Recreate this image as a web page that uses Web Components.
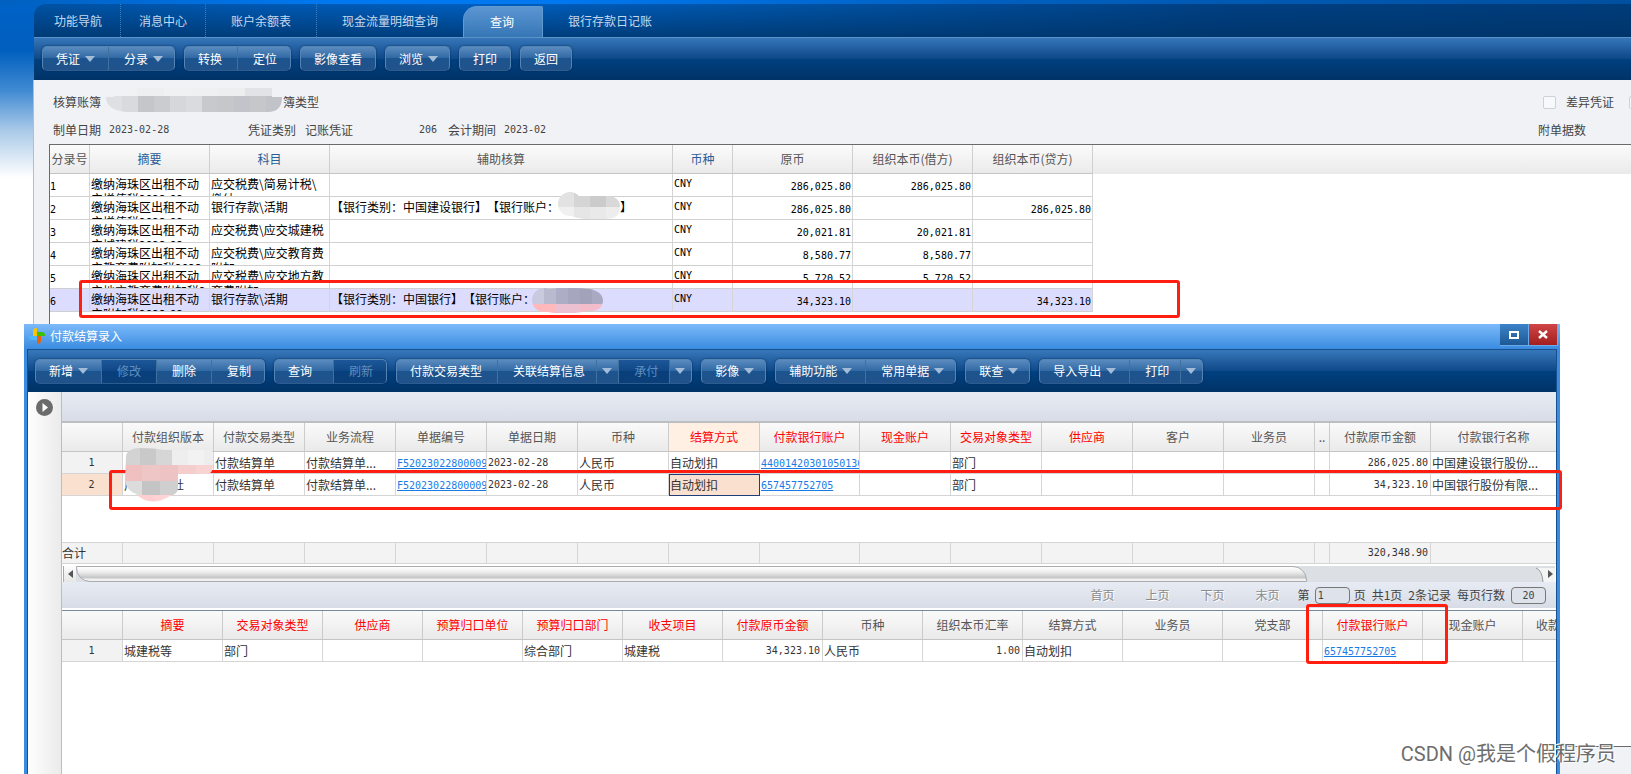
<!DOCTYPE html>
<html lang="zh-CN">
<head>
<meta charset="utf-8">
<title>付款结算录入</title>
<style>
  html, body { margin: 0; height: 100%; }
  body {
    font: 12px/16px "Noto Sans CJK SC", sans-serif;
    color: #444; background: #fff; overflow: hidden;
    --num: 10px/16px "DejaVu Sans Mono", "Liberation Mono", monospace;
  }
</style>
</head>
<body>
<erp-app></erp-app>

<script>
const define = (name, html, setup) => {
  const tpl = document.createElement('template');
  tpl.innerHTML = html;
  customElements.define(name, class extends HTMLElement {
    constructor() {
      super();
      this.attachShadow({ mode: 'open' }).append(tpl.content.cloneNode(true));
    }
    connectedCallback() { if (setup) setup(this, this.shadowRoot); }
  });
};

/* ---------- tabs ---------- */
define('erp-tab', `
<style>
  :host { display: flex; box-sizing: border-box; }
  :host([divided]) { border-right: 1px dotted #3f7dbd; }
  button { font: inherit; color: #c5d9ee; background: none; border: 0; padding: 0 18px; white-space: nowrap; }
  :host([wide]) button { padding: 0 25px; }
  :host([active]) button {
    color: #fff; padding: 0 28px 0 26px; margin-top: 2px; border: 1px solid #5f9ad3; border-bottom: 0;
    border-radius: 14px 2px 0 0; background: linear-gradient(#5b96d2, #3676b6);
  }
</style>
<button role="tab"><slot></slot></button>`);

define('erp-tabs', `
<style>
  :host {
    display: flex; height: 33px; padding: 0 16px 0 2px; border-radius: 12px 0 0 0;
    background: linear-gradient(to bottom, rgba(0,51,102,0), rgba(0,51,102,.75)),
                linear-gradient(to right, #0052a4, #005fc0 28%, #0052a4 48%, #003f82 75%, #003c7a);
  }
</style>
<slot></slot>`);

/* ---------- toolbar ---------- */
define('erp-toolbar', `
<style>
  :host {
    display: flex; align-items: center; gap: 9px; height: 43px; padding: 0 8px; box-sizing: border-box;
    border-top: 1px solid #5b93cb; padding-bottom: 1px; overflow: hidden;
    background: linear-gradient(#3676b8, #0d4788 50%, #004080 50%, #003366);
  }
  :host([inner]) { height: 42px; padding-left: 7px; border-top-color: #3676b8; }
</style>
<slot></slot>`);

define('erp-group', `
<style>
  :host {
    display: flex; flex: none; height: 25px; box-sizing: border-box; overflow: hidden;
    border: 1px solid #5585b5; border-bottom-color: #2c5d91; border-radius: 5px;
    box-shadow: 0 0 2px #002a58;
    background: linear-gradient(#5a8bbf, #2f67a2 50%, #1c548f 50%, #22528a);
  }
  ::slotted(*) { --pl: 15px; --pr: 15px; }
  ::slotted(:first-child) { --pl: 13px; }
  ::slotted(:last-child) { --pr: 13px; }
  ::slotted(:not(:first-child)) { border-left: 1px solid #3f719f; }
</style>
<slot></slot>`);

define('erp-button', `
<style>
  :host { display: flex; }
  button {
    display: flex; align-items: center; gap: 5px; font: inherit; color: #fff; background: none;
    border: 0; padding: 0 var(--pr) 0 var(--pl); white-space: nowrap;
  }
  svg { display: none; width: 10px; height: 6px; fill: #a3bcd8; }
  :host([menu]) svg, :host([split]) svg { display: block; }
  :host([menu]) button { padding-right: calc(var(--pr) - 2px); }
  :host([tight]) button { padding-right: 11px; }
  :host([roomy]) button { padding-right: 21px; }
  :host([split]) button { padding: 0 6px 0 5px; gap: 0; }
  :host([disabled]) button { color: #5f8fc0; }
  :host([disabled]) { background: linear-gradient(#1d5799, #0f4685 50%, #073f7d 50%, #0c3f78); }
</style>
<button><slot></slot><svg viewBox="0 0 10 6"><path d="M0 0H10L5 6Z"/></svg></button>`,
(host, root) => {
  if (host.hasAttribute('disabled')) root.querySelector('button').disabled = true;
  if (host.hasAttribute('split')) root.querySelector('button').setAttribute('aria-label', '更多');
});

/* ---------- voucher head ---------- */
define('voucher-head', `
<style>
  :host { display: grid; grid-template-rows: 28px 28px; padding: 8px 0 0 19px; height: 64px; box-sizing: border-box; }
  div { display: flex; align-items: center; overflow: hidden; white-space: nowrap; }
  .n { font: var(--num); }
  .a { width: 56px; } .b { width: 139px; } .c { width: 57px; } .d { width: 114px; }
  .e { width: 29px; } .type { margin-left: 174px; }
  .right { margin-left: auto; display: flex; align-items: center; gap: 10px; width: 93px; box-sizing: border-box; }
  .right.check { width: 88px; }
  input { appearance: none; box-sizing: border-box; flex: none; width: 13px; height: 13px; margin: 0; border: 1px solid #cfd1d6; border-radius: 2px; background: #f8f9fb; }
  label { white-space: nowrap; flex: none; }
  .check label { margin-right: 5px; }
</style>
<div><span class="a">核算账簿</span><span class="type">簿类型</span>
  <span class="right check"><input type="checkbox" id="diff"><label for="diff">差异凭证</label><input type="checkbox" aria-label="其他凭证"></span></div>
<div><span class="a">制单日期</span><span class="b n">2023-02-28</span><span class="c">凭证类别</span><span class="d">记账凭证</span>
  <span class="e n">206</span><span class="a">会计期间</span><span class="n">2023-02</span>
  <span class="right">附单据数</span></div>`);

/* ---------- voucher entries ---------- */
const sum = s => '缴纳海珠区出租不动<br>产' + s;
const entries = [
  [sum('增值税2023-02'), '应交税费\\简易计税\\<br>缴纳', '', '286,025.80', '286,025.80', ''],
  [sum('增值税2023-02'), '银行存款\\活期', '【银行类别：中国建设银行】【银行账户：<i></i>】', '286,025.80', '', '286,025.80'],
  [sum('城建税2023-02'), '应交税费\\应交城建税', '', '20,021.81', '20,021.81', ''],
  [sum('教育费附加税2023'), '应交税费\\应交教育费<br>附加', '', '8,580.77', '8,580.77', ''],
  [sum('地方教育费附加税2'), '应交税费\\应交地方教<br>育费附加', '', '5,720.52', '5,720.52', ''],
  [sum('附加税2023-02'), '银行存款\\活期', '【银行类别：中国银行】【银行账户：', '34,323.10', '', '34,323.10'],
];
define('voucher-grid', `
<style>
  :host { display: block; flex: 1; margin-left: 15px; border: solid #6b6b6b; border-width: 1px 0 0 1px;
    background: linear-gradient(#fbfbfb, #eaeaea) top/100% 29px no-repeat #fff; }
  table { border-collapse: separate; border-spacing: 0; table-layout: fixed; width: 1043px; color: #000; }
  th { height: 29px; padding: 0; box-sizing: border-box; font-weight: 400; color: #555; white-space: nowrap;
    border-right: 1px solid #cfcfcf; border-bottom: 1px solid #c4c4c4; }
  th.k { color: #2a5e9a; }
  td { height: 22px; padding: 0 2px 0 1px; border-right: 1px solid #d5d5d5; border-bottom: 1px solid #d0d0d0; }
  td div { height: 20px; padding-top: 2px; line-height: 15px; overflow: hidden; white-space: nowrap; font-kerning: none; font-feature-settings: "chws" 0; text-spacing-trim: space-all; }
  td div.n { font: var(--num); line-height: 15px; }
  td.n { font: var(--num); text-align: right; padding-top: 3px; height: 19px; padding-right: 1px; }
  td.n:first-child { text-align: left; padding-left: 0; }
  tr.sel td { background: #dcdcff; }
  i { display: inline-block; width: 61px; }
</style>
<table>
  <colgroup><col style="width:40px"><col style="width:120px"><col style="width:120px"><col style="width:343px"><col style="width:60px"><col style="width:120px"><col style="width:120px"><col style="width:120px"></colgroup>
  <thead><tr><th>分录号</th><th class="k">摘要</th><th class="k">科目</th><th>辅助核算</th><th class="k">币种</th><th>原币</th><th>组织本币(借方)</th><th>组织本币(贷方)</th></tr></thead>
  <tbody>${entries.map((r, i) => `<tr${i == 5 ? ' class="sel"' : ''}><td class="n">${i + 1}</td><td><div>${r[0]}</div></td><td><div>${r[1]}</div></td><td><div>${r[2]}</div></td><td><div class="n">CNY</div></td><td class="n">${r[3]}</td><td class="n">${r[4]}</td><td class="n">${r[5]}</td></tr>`).join('')}</tbody>
</table>`);

/* ---------- payment grids ---------- */
const R = t => ({ t, red: 1 }), L = t => ({ t, link: 1 }), N = t => ({ t, num: 1 }), D = t => ({ t, date: 1 });
const grids = {
  bills: {
    cols: [61, 91, 91, 91, 91, 91, 91, 91, 100, 91, 91, 91, 91, 91, 15, 101, 0],
    head: ['', '付款组织版本', '付款交易类型', '业务流程', '单据编号', '单据日期', '币种', { t: '结算方式', red: 1, hot: 1 }, R('付款银行账户'), R('现金账户'), R('交易对象类型'), R('供应商'), '客户', '业务员', '..', '付款原币金额', '付款银行名称'],
    rows: [
      ['1', '', '付款结算单', '付款结算单...', L('F52023022800009'), D('2023-02-28'), '人民币', '自动划扣', L('44001420301050136'), '', '部门', '', '', '', '', N('286,025.80'), '中国建设银行股份...'],
      [{ t: '2', hot: 1 }, '广<i></i>社', '付款结算单', '付款结算单...', L('F52023022800009'), D('2023-02-28'), '人民币', { t: '自动划扣', cur: 1 }, L('657457752705'), '', '部门', '', '', '', '', N('34,323.10'), '中国银行股份有限...'],
    ],
    foot: ['合计', '', '', '', '', '', '', '', '', '', '', '', '', '', '', N('320,348.90'), ''],
  },
  lines: {
    cols: [61, ...Array(14).fill(100), 0],
    head: ['', R('摘要'), R('交易对象类型'), R('供应商'), R('预算归口单位'), R('预算归口部门'), R('收支项目'), R('付款原币金额'), '币种', '组织本币汇率', '结算方式', '业务员', '党支部', R('付款银行账户'), '现金账户', { t: '收款', left: 1 }],
    rows: [['1', '城建税等', '部门', '', '', '综合部门', '城建税', N('34,323.10'), '人民币', N('1.00'), '自动划扣', '', '', L('657457752705'), '', '']],
  },
};
define('erp-grid', `
<style>
  :host { display: block; overflow: hidden; color: #333; }
  table { border-collapse: separate; border-spacing: 0; table-layout: fixed; width: 100%; }
  th, td { box-sizing: border-box; overflow: hidden; white-space: nowrap; border-right: 1px solid #d5d5d5; }
  th { height: 29px; padding: 0; font-weight: 400; color: #555; background: linear-gradient(#fafafa, #eaeaea);
    border-color: #cbcbcb; border-bottom: 1px solid #c4c4c4; }
  td { height: 22px; padding: 0 2px 0 1px; border-bottom: 1px solid #d5d5d5; }
  tr > :last-child { border-right: 0; }
  th.red { color: #f00; } th.hot { background: #fff0e3; } th.left { text-align: left; padding-left: 13px; }
  tbody td:first-child { text-align: center; background: #f2f2f2; font: var(--num); }
  tbody td.hot:first-child { background: #fae1cf; }
  .num, .date { font: var(--num); } .num { text-align: right; }
  a { font: var(--num); color: #1a7be6; }
  i { display: inline-block; width: 36px; }
  td.cur { background: #fae1cf; padding: 0; border: 1px solid #1f3d7a; }
  .foot { margin-top: 46px; }
  .foot td { background: #f3f3f3; border-top: 1px solid #d5d5d5; }
  .foot td:first-child { padding-left: 0; }
</style>`,
(host, root) => {
  const g = grids[host.getAttribute('name')];
  const cell = (tag, c) => {
    const o = typeof c == 'string' ? { t: c } : c;
    const cls = Object.keys(o).filter(k => k != 't' && k != 'link').join(' ');
    return `<${tag}${cls ? ` class="${cls}"` : ''}>${o.link ? `<a href="#">${o.t}</a>` : o.t}</${tag}>`;
  };
  const cols = `<colgroup>${g.cols.map(w => `<col${w ? ` style="width:${w}px"` : ''}>`).join('')}</colgroup>`;
  const row = (tag, r) => `<tr>${r.map(c => cell(tag, c)).join('')}</tr>`;
  root.querySelectorAll('table').forEach(t => t.remove());
  root.querySelector('style').insertAdjacentHTML('afterend',
    `<table>${cols}<thead>${row('th', g.head)}</thead><tbody>${g.rows.map(r => row('td', r)).join('')}</tbody></table>` +
    (g.foot ? `<table class="foot">${cols}<tfoot>${row('td', g.foot)}</tfoot></table>` : ''));
});

/* ---------- horizontal scroll bar ---------- */
define('erp-scroll', `
<style>
  :host { display: flex; height: 16px; margin: 2px 1px 0; background: #dcdfe4; box-sizing: border-box; border-left: 1px solid #aaa; }
  svg { flex: none; display: block; }
  .track { flex: 1; padding-right: 228px; }
  .thumb { height: 16px; box-sizing: border-box; border: 1px solid #a9abae; border-radius: 0 14px 0 14px;
    background: linear-gradient(#fff, #eee 35%, #c6c7c9 75%, #f2f2f2 90%); }
  .wrap { background: linear-gradient(#fdfdfd, #e6e6e6); }
</style>
<svg class="wrap" width="12" height="16"><path d="M9 4V12L4 8Z" fill="#555"/></svg>
<div class="track"><div class="thumb"></div></div>
<svg width="20" height="16"><path d="M1 2Q7 4 8 16H20V2Z" fill="#f4f4f4"/><path d="M1 2Q7 4 8 16" fill="none" stroke="#999"/><path d="M13 4V12L18 8Z" fill="#555"/></svg>`);

/* ---------- pager ---------- */
define('erp-pager', `
<style>
  :host { display: flex; justify-content: flex-end; align-items: center; height: 28px; padding-right: 10px;
    border-bottom: 2px solid #fff; background: linear-gradient(#e7ecf4, #d7dce6); white-space: nowrap; box-sizing: border-box; }
  button { font: inherit; padding: 0; border: 0; background: none; color: #8b8b8b; text-shadow: 1px 1px #fff; margin-right: 31px; }
  button:last-of-type { margin-right: 18px; }
  input { box-sizing: border-box; width: 35px; height: 17px; border: 1px solid #777; border-radius: 4px; background: #dde2eb;
    font: var(--num); color: #444; padding: 0 2px; margin: 0 4px 0 5px; }
  input.size { text-align: center; margin: 0 0 0 6px; }
  span { margin-right: 6px; }
</style>
<button>首页</button><button>上页</button><button>下页</button><button>末页</button>
<label for="p">第</label><input id="p" value="1"><span>页</span><span>共1页</span><span>2条记录</span>
<label for="s">每页行数</label><input id="s" class="size" value="20">`);

/* ---------- floating window ---------- */
define('erp-window', `
<style>
  :host { display: flex; flex-direction: column; box-sizing: border-box; border: solid #3a8ce0; border-width: 0 3px; background: #fff; }
  header { display: flex; height: 25px; flex: none; margin: 0 -3px; padding-left: 5px; background: linear-gradient(#7cbafa, #3a8be0); color: #fff; }
  .logo { margin: 4px 5px 0 0; width: 16px; height: 16px; }
  h1 { margin: 0; font: inherit; line-height: 24px; flex: 1; }
  header button { width: 29px; height: 22px; padding: 0; border: solid #6ea9ea; border-width: 0 1px 1px 0; background: linear-gradient(#3c83c8, #1d5894); }
  header button:last-child { background: linear-gradient(#d04545, #a31f1f); margin-right: 2px; }
  header svg { display: block; margin: auto; }
  .body { flex: 1; display: flex; flex-direction: column; min-height: 0; border: solid #16508f; border-width: 1px 1px 0; }
</style>
<header>
  <svg class="logo" viewBox="0 0 16 16"><path d="M4 8V3Q4 0 8 0V8Z" fill="#f8c400"/><path d="M8 4H13Q16 4 16 8H8Z" fill="#3cc000"/><path d="M8 8H12V12Q12 16 8 16Z" fill="#f06000"/><path d="M0 8H8V12H4Q0 12 0 8Z" fill="#4ab8ff"/></svg>
  <h1><slot name="title"></slot></h1>
  <button aria-label="最大化"><svg width="10" height="8"><path d="M1 1H9V7H1Z" fill="none" stroke="#fff" stroke-width="2"/></svg></button>
  <button aria-label="关闭"><svg width="10" height="9"><path d="M1 1L9 8M9 1L1 8" stroke="#fff" stroke-width="2.4"/></svg></button>
</header>
<div class="body"><slot></slot></div>`);

define('payment-body', `
<style>
  :host { display: flex; flex: 1; min-height: 0; }
  aside { flex: none; width: 33px; background: linear-gradient(to right, #fefefe, #ebebeb); border-right: 1px solid #bdbdbd; }
  aside button { display: block; margin: 7px 0 0 8px; padding: 0; border: 0; background: none; }
  svg { display: block; }
  main { flex: 1; min-width: 0; }
  .band { height: 29px; background: linear-gradient(#e7ecf4, #d7dce6); border-bottom: 2px solid #bcbec2; }
  .detail { border-top: 1px solid #76889c; }
</style>
<aside><button aria-label="展开"><svg width="17" height="17"><circle cx="8.5" cy="8.5" r="8.5" fill="#6b6b6b"/><path d="M6.500 4V13L12 8.500Z" fill="#fff"/></svg></button></aside>
<main>
  <div class="band"></div>
  <erp-grid name="bills"></erp-grid>
  <erp-scroll></erp-scroll>
  <erp-pager></erp-pager>
  <erp-grid class="detail" name="lines"></erp-grid>
</main>`);

/* ---------- annotations ---------- */
define('mark-box', `
<style>:host { position: absolute; box-sizing: border-box; border: 3px solid #ff1e10; border-radius: 3px; pointer-events: none; }</style>`);

define('water-mark', `
<style>:host { position: absolute; right: 15px; bottom: 5px; font: 20px/30px Roboto, "Noto Sans CJK SC", sans-serif; color: #6d6d6d; text-shadow: 1px 1px #fff, -1px -1px #fff; white-space: nowrap; }</style>
<slot></slot>`);

const cells = (x, y, h, w, colors) => colors.map((c, i) => `<path d="M${x + i * w} ${y}h${w + 0.5}v${h}h-${w + 0.5}z" fill="${c}"/>`).join('');
define('pixel-mask', `
<style>:host { position: absolute; pointer-events: none; } svg { display: block; }</style>`,
(host, root) => {
  const art = {
    book: [176, 24, '<path d="M8 0H166V9H176Q176 24 162 24H20Q0 22 0 9H8Z"/>',
      cells(4, 0, 9, 27, ['#f1f2f4', '#eeeff1', '#f0f1f3', '#eff0f2', '#eceef0', '#e2e3e6', '#eceef0']) + cells(0, 8, 16, 16, ['#dfe0e3', '#d9dadd', '#c5c6ca', '#cbccd0', '#d6d7da', '#dadbde', '#c8c9cd', '#c6c7cb', '#c3c4c9', '#c6c7cb', '#c2c3c8'])],
    acct: [62, 27, '<circle cx="12" cy="12" r="12"/><path d="M10 4H50Q62 5 62 15Q62 27 48 27H26Q10 25 5 18Z"/>',
      cells(0, 0, 15, 16, ['#e2e2e2', '#d5d5d5', '#cbcbcb', '#d8d8d8']) + cells(0, 15, 12, 16, ['#f0f0f0', '#e6e6e6', '#e9e9e9', '#ededed'])],
    bank: [71, 25, '<circle cx="12" cy="12" r="12"/><path d="M12 2Q30 -2 58 1Q71 4 71 13Q70 24 56 23Q30 28 12 23Z"/>',
      cells(0, 0, 16, 12, ['#c9c9df', '#b9b9d0', '#adadc6', '#a6a6bf', '#a2a2ba', '#a9a9c2']) + cells(0, 16, 9, 24, ['#ffb9bc', '#ecc0d0', '#f2bccb'])],
    org: [90, 54, '<path d="M2 8Q4 0 16 0Q30 0 40 2H88Q92 24 84 26H54V40Q54 46 46 48Q26 60 12 46Q2 42 1 32Z"/>',
      cells(0, 0, 17, 16, ['#d3d3d3', '#c9c9c9', '#d6d6d6', '#eee', '#f2f2f2', '#eee']) + cells(0, 17, 16, 18, ['#f0c0c0', '#efc6c6', '#edc3c3', '#f5cdcd', '#f9d2d2']) + cells(0, 33, 14, 18, ['#dcdcdc', '#c4c4c4', '#cfcfcf']) + cells(0, 47, 7, 30, ['#ffcfcf', '#ffd3d3'])],
  }[host.getAttribute('kind')];
  root.querySelector('svg')?.remove();
  root.querySelector('style').insertAdjacentHTML('afterend', `<svg width="${art[0]}" height="${art[1]}"><clipPath id="c">${art[2]}</clipPath><g clip-path="url(#c)">${art[3]}</g></svg>`);
});

/* ---------- page ---------- */
define('erp-app', `
<style>
  :host { display: flex; position: relative; height: 100vh; min-height: 700px; padding: 4px 0 0 33px; box-sizing: border-box; overflow: hidden;
    background: linear-gradient(to right, #0060c0, #0078f0 20%, #0078f0 34%, #0060c0 60%, #0050a0) top/100% 5px no-repeat,
      linear-gradient(#0062c8, #005fbe 50px, #3f8ad2 90px, #a9c9e8 130px, #fff 178px) top left/60px 180px no-repeat #fff; }
  .frame { flex: 1; min-width: 0; display: flex; flex-direction: column; }
  .panel { flex: 1; display: flex; flex-direction: column; background: #f1f2f6; border-left: 1px solid #b9bcc2; }
  .status { height: 27px; border-top: 1px solid #6b6b6b; }
  erp-tabs, .top { margin-left: 1px; }
  erp-window { position: absolute; left: 24px; right: 71px; top: 324px; bottom: 0; }
</style>
<div class="frame">
  <erp-tabs role="tablist">
    <erp-tab divided>功能导航</erp-tab><erp-tab divided>消息中心</erp-tab><erp-tab divided wide>账户余额表</erp-tab>
    <erp-tab wide>现金流量明细查询</erp-tab><erp-tab active>查询</erp-tab><erp-tab wide>银行存款日记账</erp-tab>
  </erp-tabs>
  <erp-toolbar class="top">
    <erp-group><erp-button menu>凭证</erp-button><erp-button menu>分录</erp-button></erp-group>
    <erp-group><erp-button>转换</erp-button><erp-button>定位</erp-button></erp-group>
    <erp-group><erp-button>影像查看</erp-button></erp-group>
    <erp-group><erp-button menu>浏览</erp-button></erp-group>
    <erp-group><erp-button>打印</erp-button></erp-group>
    <erp-group><erp-button>返回</erp-button></erp-group>
  </erp-toolbar>
  <div class="panel">
    <voucher-head></voucher-head>
    <voucher-grid></voucher-grid>
    <div class="status"></div>
  </div>
</div>
<erp-window>
  <span slot="title">付款结算录入</span>
  <erp-toolbar inner>
    <erp-group><erp-button menu>新增</erp-button><erp-button disabled>修改</erp-button><erp-button>删除</erp-button><erp-button>复制</erp-button></erp-group>
    <erp-group><erp-button roomy>查询</erp-button><erp-button disabled>刷新</erp-button></erp-group>
    <erp-group><erp-button>付款交易类型</erp-button><erp-button tight>关联结算信息</erp-button><erp-button split></erp-button><erp-button tight disabled>承付</erp-button><erp-button split></erp-button></erp-group>
    <erp-group><erp-button menu>影像</erp-button></erp-group>
    <erp-group><erp-button menu>辅助功能</erp-button><erp-button menu>常用单据</erp-button></erp-group>
    <erp-group><erp-button menu>联查</erp-button></erp-group>
    <erp-group><erp-button menu>导入导出</erp-button><erp-button tight>打印</erp-button><erp-button split></erp-button></erp-group>
  </erp-toolbar>
  <payment-body></payment-body>
</erp-window>
<mark-box style="left:79px;top:280px;width:1101px;height:38px"></mark-box>
<mark-box style="left:109px;right:69px;top:470px;height:40px"></mark-box>
<mark-box style="left:1306px;top:604px;width:142px;height:60px"></mark-box>
<pixel-mask kind="book" style="left:106px;top:88px"></pixel-mask>
<pixel-mask kind="acct" style="left:558px;top:192px"></pixel-mask>
<pixel-mask kind="bank" style="left:532px;top:288px"></pixel-mask>
<pixel-mask kind="org" style="left:124px;top:448px"></pixel-mask>
<water-mark>CSDN @我是个假程序员</water-mark>`);
</script>
</body>
</html>
